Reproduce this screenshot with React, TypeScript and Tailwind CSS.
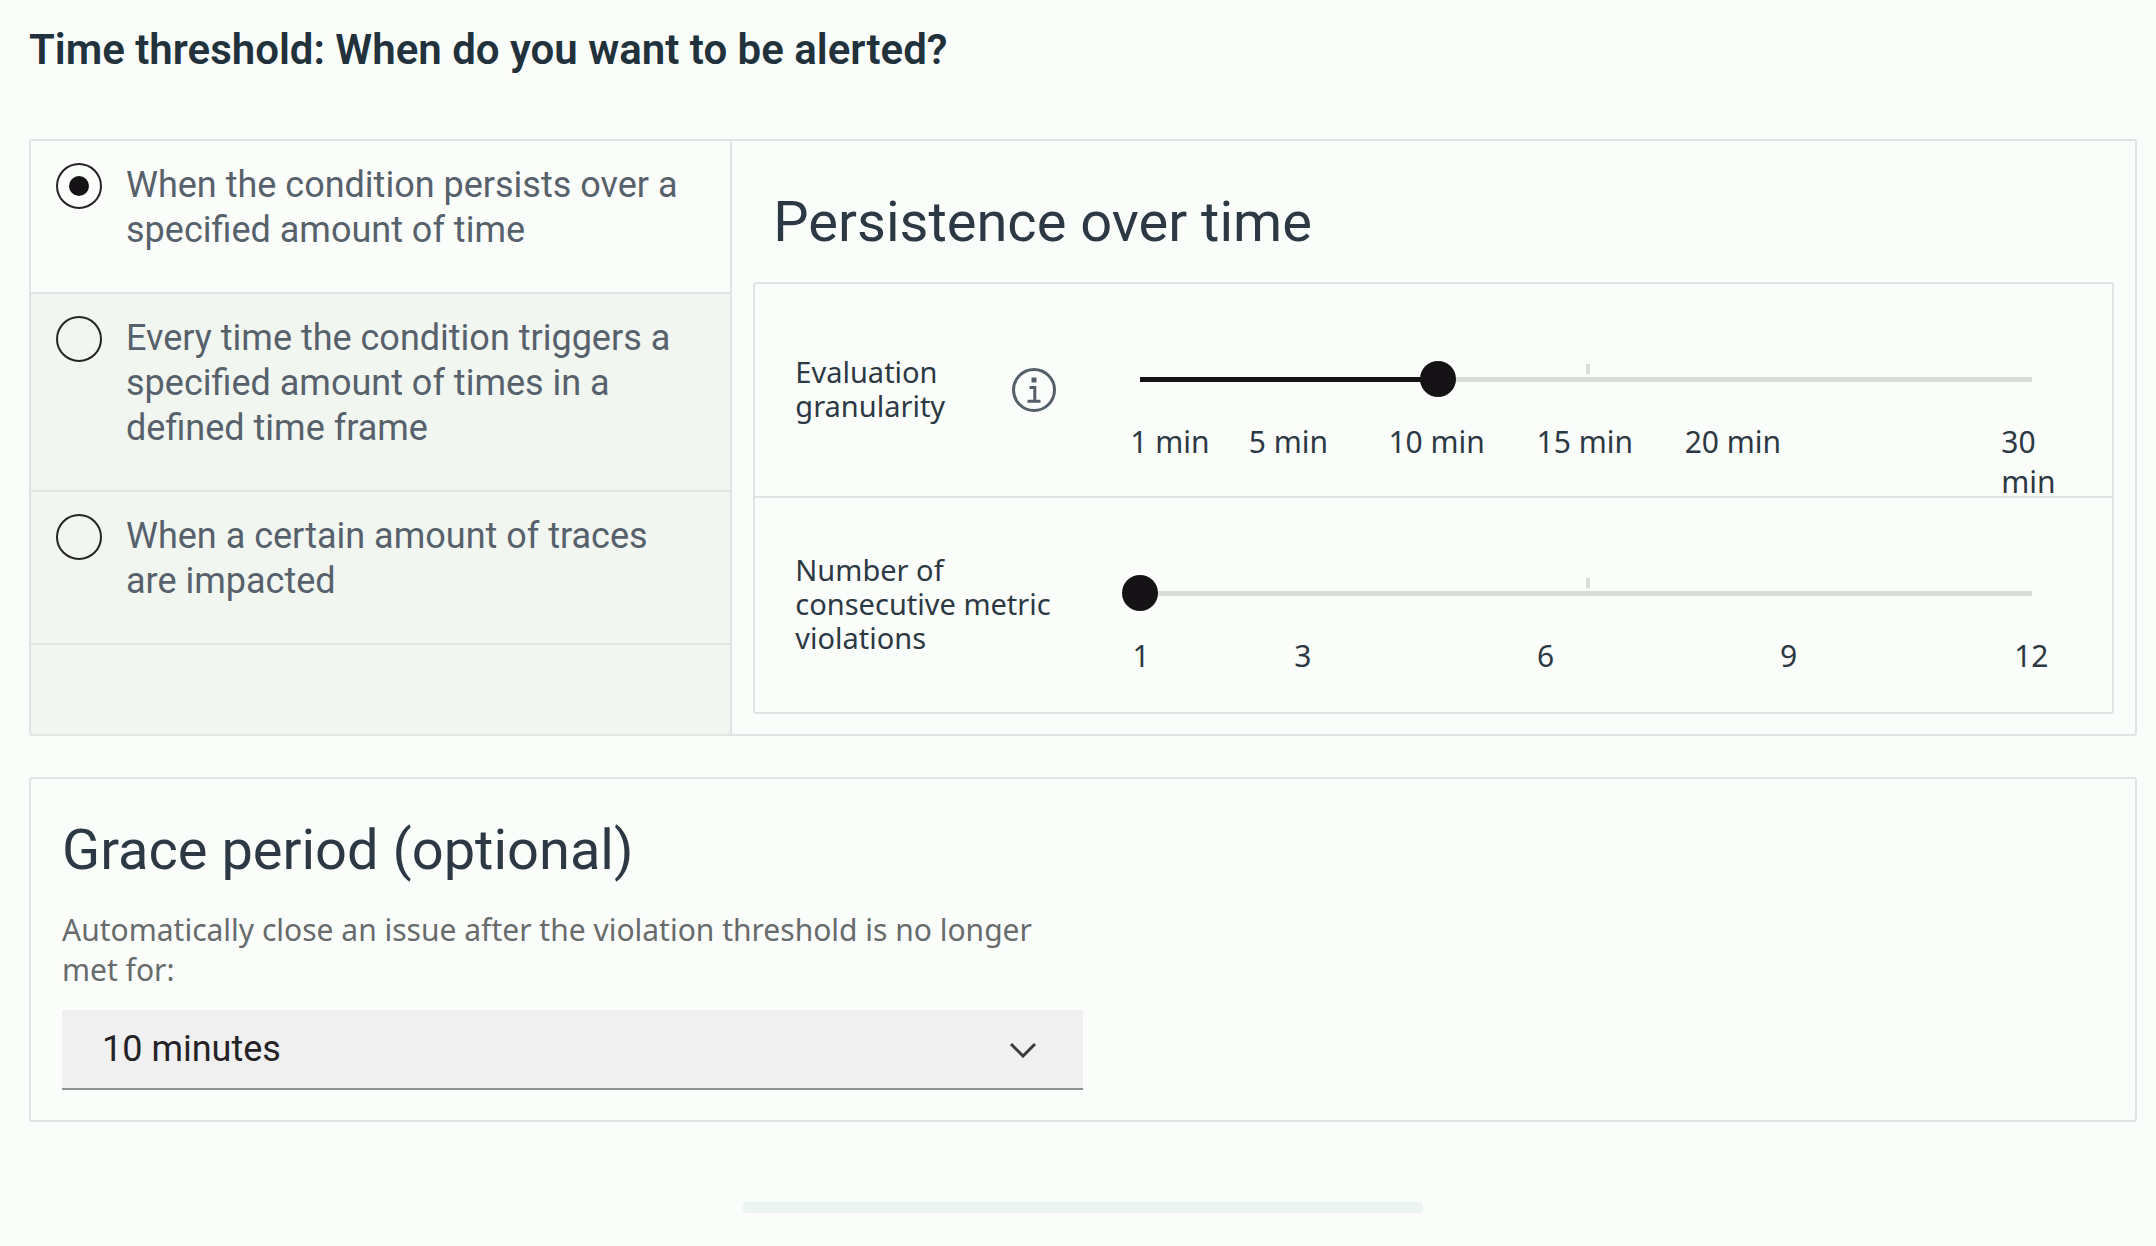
import { useState } from "react";
import type { ReactNode } from "react";

const OPTIONS = [
  { id: "persist", label: "When the condition persists over a specified amount of time" },
  { id: "frequency", label: "Every time the condition triggers a specified amount of times in a defined time frame" },
  { id: "traces", label: "When a certain amount of traces are impacted" },
];

function InfoIcon() {
  return (
    <svg viewBox="0 0 44 44" className="size-11" fill="none" stroke="#55606a" aria-hidden="true">
      <circle cx="22" cy="22" r="20.5" strokeWidth="3" />
      <path d="M17.5 19.5H22.8V33M15.5 33.2H28.5" strokeWidth="3" />
      <rect x="19.5" y="9.5" width="5" height="5" fill="#55606a" stroke="none" />
    </svg>
  );
}

type SliderProps = {
  id: string;
  min: number;
  max: number;
  step: number;
  value: number;
  onChange: (value: number) => void;
  children: ReactNode;
};

function Slider({ id, min, max, step, value, onChange, children }: SliderProps) {
  const percent = ((value - min) / (max - min)) * 100;
  return (
    <div className="min-w-0 flex-1 pt-[77px]">
      <div className="relative h-9">
        <div className="absolute inset-x-0 top-4 h-[5px] bg-[#dadcd9]" />
        <div className="absolute left-0 top-4 h-[5px] bg-[#161316]" style={{ width: `${percent}%` }} />
        <div className="absolute left-1/2 top-[3px] h-[10px] w-1 bg-[#dadcd9]" />
        <input
          id={id}
          type="range"
          min={min}
          max={max}
          step={step}
          value={value}
          onChange={(e) => onChange(Number(e.target.value))}
          className="absolute -left-[18px] top-0 h-9 w-[calc(100%+36px)] cursor-pointer appearance-none bg-transparent [&::-webkit-slider-thumb]:size-9 [&::-webkit-slider-thumb]:appearance-none [&::-webkit-slider-thumb]:rounded-full [&::-webkit-slider-thumb]:bg-[#161316]"
        />
      </div>
      {children}
    </div>
  );
}

export default function App() {
  const [selected, setSelected] = useState("persist");
  const [granularity, setGranularity] = useState(10);
  const [violations, setViolations] = useState(1);

  return (
    <main className="min-h-screen bg-[#fbfdfa] pt-6 pr-[19px] pb-[30px] pl-[29px] font-['Roboto',sans-serif] text-[#2c3944]">
      <h1 className="text-[42px] leading-[52px] font-semibold text-[#22323c]">
        Time threshold: When do you want to be alerted?
      </h1>

      <section className="mt-[63px] flex rounded-[3px] border-2 border-[#dfe5e5]">
        <div
          role="radiogroup"
          aria-label="Time threshold"
          className="flex w-1/3 shrink-0 flex-col border-r-2 border-[#dfe5e5] bg-[#f2f6f1]"
        >
          {OPTIONS.map((option) => (
            <label
              key={option.id}
              className="flex cursor-pointer gap-6 border-b-2 border-[#dfe5e5] pt-[22px] pr-8 pb-[39px] pl-[25px] text-[36px] leading-[45px] text-[#57616b] has-checked:bg-[#fbfdfa]"
            >
              <input
                type="radio"
                name="threshold"
                checked={selected === option.id}
                onChange={() => setSelected(option.id)}
                className="grid size-[46px] shrink-0 appearance-none place-content-center rounded-full border-2 border-[#262324] before:size-5 before:rounded-full checked:before:bg-[#161316]"
              />
              <span>{option.label}</span>
            </label>
          ))}
        </div>

        <div className="min-w-0 flex-1 px-[21px] pt-[45px] pb-5">
          <h2 className="px-5 text-[56px] leading-[72px]">Persistence over time</h2>
          <div className="mt-6 rounded-[3px] border-2 border-[#dfe5e5] font-['Noto_Sans',sans-serif] text-[30px]">
            <div className="flex h-[214px] border-b-2 border-[#dfe5e5] pr-20 pl-10">
              <div className="mr-[84px] flex w-[261px] shrink-0 items-center justify-between text-[29px] leading-[34px]">
                <label htmlFor="granularity" className="w-40 pb-0.5">
                  Evaluation granularity
                </label>
                <button type="button" aria-label="About evaluation granularity">
                  <InfoIcon />
                </button>
              </div>
              <Slider id="granularity" min={0} max={30} step={5} value={granularity} onChange={setGranularity}>
                <div className="-mr-[8%] mt-[25px] grid grid-cols-[minmax(0,1fr)_repeat(6,minmax(0,2fr))] justify-items-center leading-10 whitespace-nowrap">
                  <span className="-ml-[10px] justify-self-start">1 min</span>
                  <span>5 min</span>
                  <span>10 min</span>
                  <span>15 min</span>
                  <span>20 min</span>
                  <span />
                  <span className="w-14 whitespace-normal">30 min</span>
                </div>
              </Slider>
            </div>
            <div className="flex h-[214px] pr-20 pl-10">
              <div className="mr-[84px] flex w-[261px] shrink-0 items-center text-[29px] leading-[34px]">
                <label htmlFor="violations" className="pb-0.5">
                  Number of consecutive metric violations
                </label>
              </div>
              <Slider id="violations" min={1} max={12} step={1} value={violations} onChange={setViolations}>
                <div className="-mr-[9%] -ml-[9%] mt-[25px] grid grid-cols-[2fr_2fr_4fr_2fr_1fr_2fr] justify-items-center leading-10">
                  <span>1</span>
                  <span>3</span>
                  <span>6</span>
                  <span>9</span>
                  <span />
                  <span>12</span>
                </div>
              </Slider>
            </div>
          </div>
        </div>
      </section>

      <section className="mt-[41px] rounded-[3px] border-2 border-[#dfe5e5] px-[31px] pt-[35px] pb-[30px]">
        <h2 className="text-[56px] leading-[72px]">Grace period (optional)</h2>
        <div className="w-1/2">
          <label
            htmlFor="grace"
            className="mt-6 block font-['Noto_Sans',sans-serif] text-[30px] leading-10 text-[#676b6c]"
          >
            Automatically close an issue after the violation threshold is no longer met for:
          </label>
          <div className="relative mt-5">
            <select
              id="grace"
              defaultValue="10"
              className="block h-20 w-full appearance-none border-b-2 border-[#8f9191] bg-[#f0f0f0] pr-24 pl-10 text-[36px] text-[#242226]"
            >
              <option value="5">5 minutes</option>
              <option value="10">10 minutes</option>
              <option value="30">30 minutes</option>
            </select>
            <svg
              viewBox="0 0 28 16"
              className="pointer-events-none absolute top-8 right-[46px] h-4 w-7"
              fill="none"
              stroke="#3c3a3e"
              strokeWidth="3"
              aria-hidden="true"
            >
              <path d="M2 2L14 14L26 2" />
            </svg>
          </div>
        </div>
      </section>

      <div className="mx-auto mt-20 h-[11px] w-[680px] rounded-[4px] bg-[#ebf4f0]" />
    </main>
  );
}
